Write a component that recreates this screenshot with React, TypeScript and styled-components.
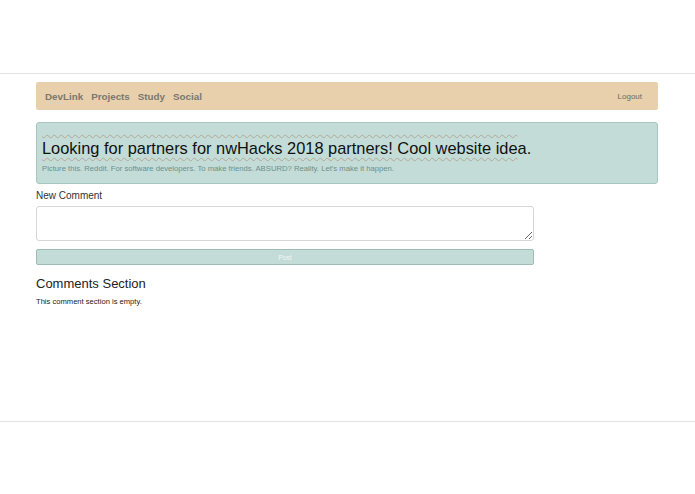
import { FC } from 'react';
import styled, { createGlobalStyle } from 'styled-components';

const GlobalStyle = createGlobalStyle`
  html, body {
    margin: 0;
    padding: 0;
    background: #fff;
    font-family: "Liberation Sans", Arial, Helvetica, sans-serif;
    color: #333;
  }
`;

const Page = styled.div`
  display: flex;
  flex-direction: column;
  padding-top: 73px;
`;

const Frame = styled.div`
  border-top: 1px solid #e3e3e3;
  border-bottom: 1px solid #e3e3e3;
  height: 349px;
  box-sizing: border-box;
  padding: 8px 37px 0 36px;
  display: flex;
  flex-direction: column;
`;

const NavBar = styled.nav`
  height: 28px;
  background: #e8d0ad;
  border-radius: 2px;
  display: flex;
  align-items: center;
  padding: 0 9px;
  box-sizing: border-box;
`;

const NavLinks = styled.div`
  display: flex;
  gap: 8px;
  flex: 1;
`;

const NavLink = styled.a`
  font-size: 9.8px;
  font-weight: bold;
  color: #7a776f;
  text-decoration: none;
`;

const Logout = styled.a`
  font-size: 8px;
  color: #6f6a62;
  margin-right: 7px;
`;

const Alert = styled.div`
  margin-top: 12px;
  height: 62px;
  box-sizing: border-box;
  background: #c3dcd7;
  border: 1px solid #a8c6c0;
  border-radius: 3px;
  padding: 11px 5px 0;
`;

const Title = styled.h1`
  margin: 0;
  font-size: 16.4px;
  font-weight: normal;
  color: #111;
  line-height: 28px;
`;

const Misspelled = styled.span`
  text-decoration: wavy overline underline #b3a898;
  text-decoration-thickness: 1px;
  text-underline-offset: 3px;
`;

const Subtitle = styled.p`
  margin: 2px 0 0;
  font-size: 7.7px;
  color: #6e8f8c;
  line-height: 10px;
`;

const Label = styled.label`
  display: block;
  margin-top: 5px;
  font-size: 10px;
  color: #333;
  line-height: 13px;
`;

const TextArea = styled.textarea`
  display: block;
  margin-top: 4px;
  width: 498px;
  height: 35px;
  box-sizing: border-box;
  border: 1px solid #d6d6d6;
  border-radius: 3px;
  resize: vertical;
`;

const PostButton = styled.button`
  margin-top: 8px;
  width: 498px;
  height: 16px;
  box-sizing: border-box;
  background: #c3dcd7;
  border: 1px solid #9ebbb5;
  border-radius: 2px;
  color: #f2f7f6;
  font-family: inherit;
  font-size: 6.5px;
  padding: 0;
`;

const SectionTitle = styled.h2`
  margin: 11px 0 0;
  font-size: 13px;
  font-weight: normal;
  color: #222;
  line-height: 16px;
`;

const Empty = styled.p`
  margin: 5px 0 0;
  font-size: 7.6px;
  color: #222;
`;

const App: FC = () => {
  const links = ['DevLink', 'Projects', 'Study', 'Social'];
  return (
    <Page>
      <GlobalStyle />
      <Frame>
        <NavBar>
          <NavLinks>
            {links.map((l) => (
              <NavLink key={l}>{l}</NavLink>
            ))}
          </NavLinks>
          <Logout>Logout</Logout>
        </NavBar>
        <Alert>
          <Title>
            <Misspelled>Looking for partners for nwHacks 2018 partners! Cool website ide</Misspelled>a.
          </Title>
          <Subtitle>
            Picture this. Reddit. For software developers. To make friends. ABSURD? Reality. Let's make it happen.
          </Subtitle>
        </Alert>
        <Label>New Comment</Label>
        <TextArea />
        <PostButton>Post</PostButton>
        <SectionTitle>Comments Section</SectionTitle>
        <Empty>This comment section is empty.</Empty>
      </Frame>
    </Page>
  );
};

export default App;
